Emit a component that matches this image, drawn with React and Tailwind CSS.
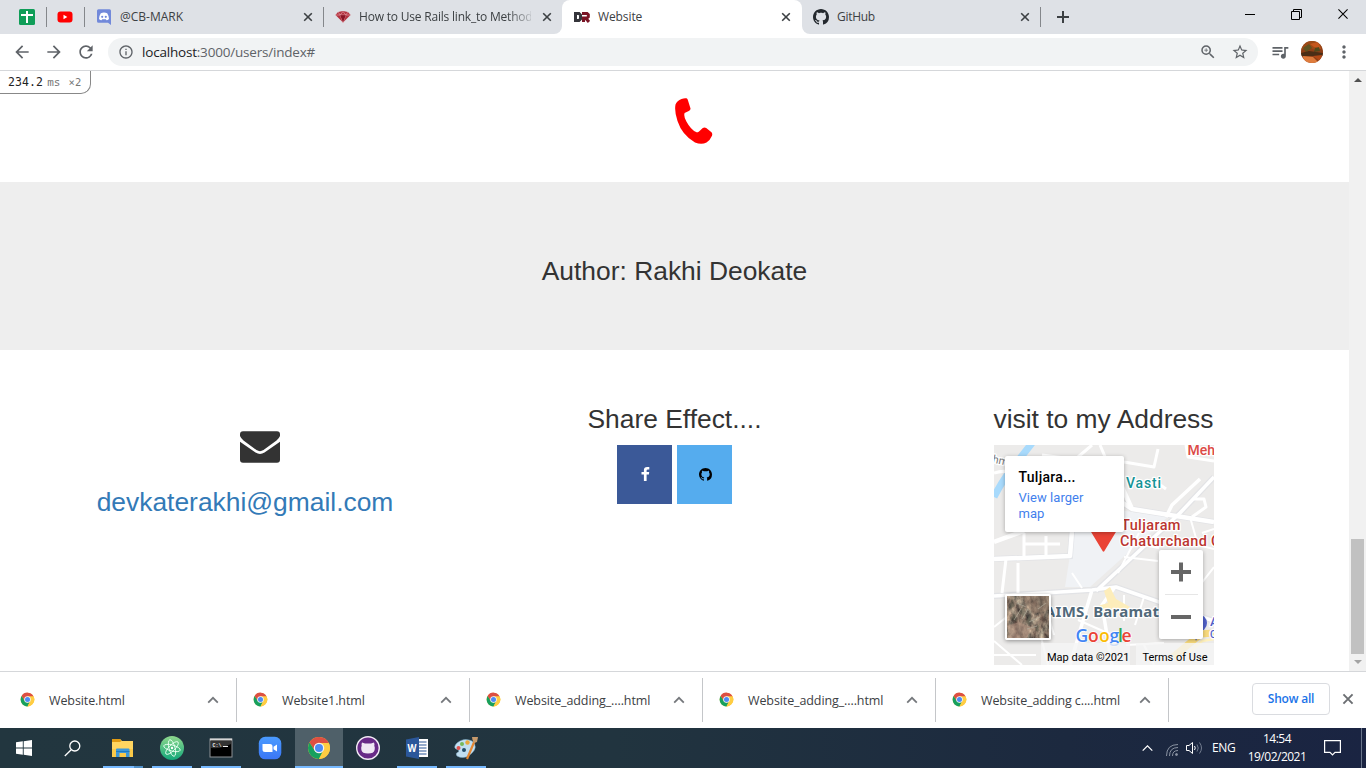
import React from "react";
import { MdArrowBack, MdArrowForward, MdRefresh, MdInfoOutline, MdStarBorder, MdZoomIn, MdQueueMusic, MdMoreVert } from "react-icons/md";

const GithubMark = ({ className }) => (
  <svg viewBox="0 0 16 16" className={className} fill="currentColor">
    <path d="M8 0C3.58 0 0 3.58 0 8c0 3.54 2.29 6.53 5.47 7.59.4.07.55-.17.55-.38 0-.19-.01-.82-.01-1.49-2.01.37-2.53-.49-2.69-.94-.09-.23-.48-.94-.82-1.13-.28-.15-.68-.52-.01-.53.63-.01 1.08.58 1.23.82.72 1.21 1.87.87 2.33.66.07-.52.28-.87.51-1.07-1.78-.2-3.64-.89-3.64-3.95 0-.87.31-1.59.82-2.15-.08-.2-.36-1.02.08-2.12 0 0 .67-.21 2.2.82.64-.18 1.32-.27 2-.27.68 0 1.36.09 2 .27 1.53-1.04 2.2-.82 2.2-.82.44 1.1.16 1.92.08 2.12.51.56.82 1.27.82 2.15 0 3.07-1.87 3.75-3.65 3.95.29.25.54.73.54 1.48 0 1.07-.01 1.93-.01 2.2 0 .21.15.46.55.38A8.013 8.013 0 0016 8c0-4.42-3.58-8-8-8z" />
  </svg>
);

const Chrome = ({ className }) => (
  <svg viewBox="0 0 48 48" className={className}>
    <circle cx="24" cy="24" r="22" fill="#fbc93b" />
    <path d="M24 14H43.600A22 22 0 0 0 4.950 13L15.300 29Z" fill="#dd4f43" />
    <path d="M4.950 13A22 22 0 0 0 24 46L32.700 29L24 34L15.300 29Z" fill="#17a05e" />
    <path d="M24 46A22 22 0 0 0 43.600 14H24L32.700 29Z" fill="#ffcd42" />
    <circle cx="24" cy="24" r="10.500" fill="#f4f4f4" />
    <circle cx="24" cy="24" r="8" fill="#4c8bf5" />
  </svg>
);

const Cross = ({ className }) => (
  <svg viewBox="0 0 10 10" className={className} stroke="currentColor" fill="none">
    <path d="M1.200 1.200L8.800 8.800M8.800 1.200L1.200 8.800" />
  </svg>
);

const Chevron = ({ className }) => (
  <svg viewBox="0 0 12 8" className={className} stroke="currentColor" fill="none">
    <path d="M1.200 6.600L6 1.800L10.800 6.600" />
  </svg>
);

function TabStrip() {
  return (
    <div className="flex h-[34px] bg-white text-[12px] text-[#3c4043]">
      <div className="flex h-full w-[562px] items-center rounded-br-[8px] bg-[#dee1e6]">
        <div className="flex w-[47px] justify-end">
          <svg viewBox="0 0 16 16" className="mr-[11px] h-4 w-4">
            <rect width="16" height="16" rx="1.500" fill="#0f9d58" />
            <path d="M8 2V14M2 6H14" stroke="#fff" strokeWidth="2" />
          </svg>
          <div className="-my-0.5 h-5 w-px bg-[#84878b]" />
        </div>
        <div className="flex w-[38px] justify-end">
          <svg viewBox="0 0 16 16" className="mr-[11px] h-4 w-4">
            <rect x="0.500" y="2.500" width="15" height="11" rx="3" fill="#f00" />
            <path d="M6.500 5.800V10.200L10.300 8Z" fill="#fff" />
          </svg>
          <div className="-my-0.5 h-5 w-px bg-[#84878b]" />
        </div>
        <div className="flex w-[239px] items-center">
          <svg viewBox="0 0 16 16" className="ml-[12px] h-4 w-4 shrink-0">
            <path d="M1.500 0.300H12.500A1.500 1.500 0 0 1 14 1.800V16L11 13.700H1.500A1.500 1.500 0 0 1 0 12.200V1.800A1.500 1.500 0 0 1 1.500 0.300Z" fill="#7289da" />
            <path d="M3.800 4.200Q7 2.800 10.200 4.200Q12 7 12 10Q10.800 11.200 9.500 11.200L8.800 10.200H5.200L4.500 11.200Q3.200 11.200 2 10Q2 7 3.800 4.200Z" fill="#fff" />
            <circle cx="5.200" cy="7.800" r="1.100" fill="#7289da" />
            <circle cx="8.800" cy="7.800" r="1.100" fill="#7289da" />
          </svg>
          <span className="ml-[7px] flex-1">@CB-MARK</span>
          <Cross className="mr-[10px] h-[10px] w-[10px] stroke-[1.600]" />
          <div className="h-5 w-px bg-[#84878b]" />
        </div>
        <div className="flex w-[238px] items-center">
          <svg viewBox="0 0 16 12" className="ml-[11px] h-3 w-4 shrink-0">
            <path d="M3 1L8 0L13 1L15.500 4L8 11.500L0.500 4Z" fill="#b3323f" />
            <path d="M3 1L5.200 4L8 0.500L10.800 4L13 1M0.500 4H15.500M5.200 4L8 11.500L10.800 4" stroke="#e39aa2" strokeWidth="0.700" fill="none" />
            <path d="M5.200 4.300H10.800L8 11Z" fill="#8a1526" />
          </svg>
          <span className="ml-[8px] w-[172px] overflow-hidden whitespace-nowrap tracking-[-0.2px] [mask-image:linear-gradient(to_right,black_86%,rgba(0,0,0,0.2))]">How to Use Rails link_to Method</span>
          <Cross className="ml-[11px] h-[10px] w-[10px] stroke-[1.600]" />
        </div>
      </div>
      <div className="h-full w-[240px] bg-[#dee1e6]">
        <div className="flex h-full items-center rounded-t-[8px] bg-white pl-[12px] pr-[11px]">
          <svg viewBox="0 0 16 12" className="h-3 w-4 shrink-0" fill="none" strokeWidth="3">
            <path d="M1.500 11V2.500H5L6.500 4V8L5 9.500H3" stroke="#35353b" />
            <path d="M9.500 11V7H13L14.300 5.800V3.700L13 2.500H8M11.500 7L15 11" stroke="#7a1425" />
          </svg>
          <span className="ml-[8px] flex-1 tracking-[-0.1px]">Website</span>
          <Cross className="h-[10px] w-[10px] stroke-[1.600]" />
        </div>
      </div>
      <div className="flex h-full flex-1 items-center rounded-bl-[8px] bg-[#dee1e6]">
        <GithubMark className="ml-[11px] h-4 w-4 text-[#24292e]" />
        <span className="ml-[8px] w-[183px] tracking-[-0.3px]">GitHub</span>
        <Cross className="h-[10px] w-[10px] stroke-[1.600]" />
        <div className="ml-[10px] h-5 w-px bg-[#84878b]" />
        <svg viewBox="0 0 12 12" className="ml-[16px] h-3 w-3" stroke="#3c4043" strokeWidth="2"><path d="M6 0V12M0 6H12" /></svg>
        <div className="mb-[6px] ml-auto flex items-center text-black">
          <svg viewBox="0 0 10 10" className="mr-[36px] h-[10px] w-[10px]" stroke="currentColor"><path d="M0 5.500H10" /></svg>
          <svg viewBox="0 0 11 11" className="mr-[35px] h-[11px] w-[11px]" stroke="currentColor" fill="none"><path d="M0.500 2.500H8.500V10.500H0.500ZM2.500 2.500V0.500H10.500V8.500H8.500" /></svg>
          <Cross className="mr-[17px] h-[12px] w-[12px] stroke-[0.900]" />
        </div>
      </div>
    </div>
  );
}

function Toolbar() {
  return (
    <div className="flex h-[37px] items-center border-b border-[#d5d7da] bg-white text-[#5f6368]">
      <MdArrowBack className="ml-[12px] h-5 w-5" />
      <MdArrowForward className="ml-[12px] h-5 w-5" />
      <MdRefresh className="ml-[12px] h-5 w-5" />
      <div className="ml-[12px] flex h-7 w-[1150px] items-center rounded-full bg-[#f1f3f4]">
        <MdInfoOutline className="ml-[10px] h-4 w-4" />
        <span className="ml-[8px] flex-1 text-[13.5px] tracking-[-0.2px]"><span className="text-[#202124]">localhost</span>:3000/users/index#</span>
        <MdZoomIn className="h-[18px] w-[18px]" />
        <MdStarBorder className="ml-[14px] mr-[9px] h-[18px] w-[18px]" />
      </div>
      <MdQueueMusic className="ml-[12px] h-5 w-5" />
      <svg viewBox="0 0 22 22" className="ml-[11px] h-[22px] w-[22px]">
        <defs>
          <clipPath id="face"><circle cx="11" cy="11" r="11" /></clipPath>
          <filter id="blend"><feGaussianBlur stdDeviation="0.700" /></filter>
        </defs>
        <g clipPath="url(#face)">
          <rect width="22" height="22" fill="#8e3f17" />
          <g filter="url(#blend)">
            <path d="M0 0H22V6L14 9L8 6L0 9Z" fill="#9c4a19" />
            <path d="M2 7L8 3L11 7L5 11Z" fill="#5e5220" />
            <path d="M9 3L17 1L20 8L13 6Z" fill="#c5561c" />
            <path d="M14 7L18 6L19 10L13 11Z" fill="#4f4a1e" />
            <path d="M0 12L8 10L22 12V15H0Z" fill="#4c2d14" />
            <path d="M2 15L12 16L18 22H3Z" fill="#df7b3d" />
            <path d="M12 15L21 14L19 20Z" fill="#b34a18" />
          </g>
        </g>
      </svg>
      <MdMoreVert className="ml-[11px] h-5 w-5" />
    </div>
  );
}

function MapView() {
  return (
    <div className="relative h-[220px] w-[220px] overflow-hidden font-[Roboto,sans-serif]">
      <svg viewBox="0 0 220 220" className="h-full w-full">
        <rect width="220" height="220" fill="#ecebea" />
        <path d="M76 86L117 64L174 72L96 142L71 142L76 110Z" fill="#f0f2f5" />
        <path d="M0 52Q10 32 24 16L38 -2" stroke="#a8dafc" strokeWidth="7" fill="none" />
        <g stroke="#dcdee2" strokeWidth="6" fill="none" opacity="0.600">
          <path d="M0 114L76 111L78 86M120 52L138 64L220 77M0 151L98 145L122 142L220 176M102 146L186 68L220 32" />
        </g>
        <g stroke="#fff" fill="none" strokeLinejoin="round">
          <path strokeWidth="4.500" d="M0 114L76 111L78 86M0 97L30 86M120 52L138 64L220 77M138 64L128 42" />
          <path strokeWidth="3.500" d="M0 151L98 145L122 142L220 176M98 145L76 220M121 142L108 160L118 220M102 146L186 68L220 32M172 72L178 60L206 34" />
          <path strokeWidth="3" d="M0 28Q18 22 30 38M48 10L78 14M98 0L84 12M106 0L112 14L160 22L164 4M192 0L194 12L220 16M158 34L172 44M200 54H210L212 62L198 72M30 88V112M52 91V110M30 99H66M12 114L8 148M24 118V150" />
          <path strokeWidth="2" d="M78 128L88 143M124 128L145 88M130 112L164 116M139 98L165 103M154 92L164 97M196 72L204 100L220 104M208 88L220 84M36 150L24 163L0 182M48 150L60 190M84 175L118 190M130 150V176M150 152L141 180M132 200L170 198M208 110L196 134L180 140M220 122L206 140M44 180L54 220M0 196L28 220M0 210H42M150 200L160 220" />
        </g>
        <path d="M110 146L116 142L122 154L136 162L132 166L119 163L116 172H100V162L114 158Z" fill="#fdedba" />
        <path d="M179 212L207 189L220 188" stroke="#f8da7c" strokeWidth="7" fill="none" />
        <path d="M184 218L208 196L220 194" stroke="#fff1bd" strokeWidth="2.500" fill="none" />
        <circle cx="204" cy="178" r="9" fill="#5161c8" />
        <path d="M198 184L202 196L207 185Z" fill="#5161c8" />
        <circle cx="204" cy="178" r="4.500" fill="#c8cff6" />
        <path d="M96.500 86H122.500L111 105Q109.500 108.500 108 105Z" fill="#ea4335" />
        <g fontFamily="Roboto, sans-serif" stroke="#fff" strokeWidth="2.500" paintOrder="stroke" strokeLinejoin="round" fontWeight="500">
          <text x="193.500" y="9.500" fontSize="14" fill="#dc4a45">Meh</text>
          <text x="132" y="42.500" fontSize="14" fill="#159396" textLength="35">Vasti</text>
          <text x="127" y="85" fontSize="14.500" fill="#bb3530" textLength="59.500">Tuljaram</text>
          <text x="126" y="101" fontSize="14.500" fill="#bb3530" textLength="87">Chaturchand</text>
          <text x="217" y="101" fontSize="14.500" fill="#bb3530">C</text>
          <text x="216" y="181" fontSize="13" fill="#5161c8">A</text>
          <text x="216" y="193" fontSize="10" fill="#5161c8">C</text>
          <text x="-2" y="18" fontSize="11" fontWeight="400" fill="#777" transform="rotate(12 0 18)">hm</text>
          <text x="51" y="172" fontSize="15" fill="#51697a" fontFamily="Noto Sans, sans-serif" fontWeight="700" textLength="114">AIMS, Baramat</text>
        </g>
        <g fontFamily="Open Sans, sans-serif" fontSize="17.500" fontWeight="600" stroke="#fff" strokeWidth="1.500" paintOrder="stroke">
          <text y="197" x="81.500" fill="#4285f4">G</text>
          <text y="197" x="94" fill="#ea4335">o</text>
          <text y="197" x="105" fill="#fbbc05">o</text>
          <text y="197" x="115.500" fill="#4285f4">g</text>
          <text y="197" x="127.500" fill="#ea4335">e</text>
          <text y="197" x="124" fill="#34a853" stroke="none">l</text>
        </g>
      </svg>
      <div className="absolute left-[11px] top-[11px] h-[76px] w-[119px] rounded-[2px] bg-white pl-[13.5px] pt-[12px] shadow-[0_1px_4px_rgba(0,0,0,0.3)]">
        <div className="text-[14px] font-medium leading-[18px] tracking-[0.3px] text-black">Tuljara...</div>
        <div className="mt-[4px] w-[80px] text-[13px] leading-[16px] tracking-[0.05px] text-[#427fed]">View larger map</div>
      </div>
      <div className="absolute left-[11px] top-[149px] h-[46px] w-[46px] rounded-[2px] border-2 border-white shadow-[0_1px_4px_rgba(0,0,0,0.4)]">
        <svg viewBox="0 0 42 42" className="h-full w-full">
          <defs><filter id="terrain" colorInterpolationFilters="sRGB"><feTurbulence type="fractalNoise" baseFrequency="0.160 0.100" numOctaves="4" seed="7" /><feColorMatrix values="1 0 0 0 0.020  0.900 0.100 0 0 -0.040  0.750 0.100 0 0 -0.020  0 0 0 0 1" /></filter></defs>
          <rect width="42" height="42" fill="#827768" />
          <rect width="42" height="42" filter="url(#terrain)" />
          <path d="M0 30L12 26L24 31L20 42H3Z" fill="#b89683" opacity="0.500" />
          <path d="M14 0H42V14L26 18Z" fill="#957c6b" opacity="0.450" />
          <path d="M5 1L8 10L2 14ZM12 17L17 9L18 21ZM18 26L24 18L23 29ZM2 22L8 18L10 26ZM28 34L34 25L31 36Z" fill="#555b4a" opacity="0.350" />
          <path d="M7 24L14 13M15 23L21 13M22 26L33 21M20 33L30 30M10 7L19 11M31 13L39 7" stroke="#b5b2a2" opacity="0.600" />
        </svg>
      </div>
      <div className="absolute left-[165px] top-[105px] flex h-[89px] w-[44px] flex-col items-center justify-around rounded-[2px] bg-white shadow-[0_1px_4px_rgba(0,0,0,0.3)]">
        <svg viewBox="0 0 20 20" className="h-5 w-5" stroke="#666" strokeWidth="4"><path d="M10 0.500V19.500M0 10H20" /></svg>
        <div className="-my-3 h-px w-[33px] bg-[#e6e6e6]" />
        <svg viewBox="0 0 20 20" className="h-5 w-5" stroke="#666" strokeWidth="4"><path d="M0 10H20" /></svg>
      </div>
      <div className="absolute bottom-0 right-0 flex h-[15px] items-center whitespace-nowrap text-[11px] text-black">
        <span className="mr-[6px] bg-[#f5f5f5]/80 pl-[6px] pr-[1px]">Map data ©2021</span>
        <span className="bg-[#f5f5f5]/80 pl-[6px] pr-[6.500px]">Terms of Use</span>
      </div>
    </div>
  );
}

function Page() {
  return (
    <div className="flex h-[600px] bg-white font-['Liberation_Sans',sans-serif]">
      <div className="relative w-[1349px] text-[26.400px] leading-[29px] text-[#333]">
        <div className="absolute left-0 top-0 flex h-[23px] w-[91px] items-center rounded-br-[10px] border-b border-r border-[#888] pl-[8px] pt-[1px] font-['DejaVu_Sans_Mono',monospace] text-[11.500px] leading-none text-[#222]">
          <span className="tracking-[0.1px]">234.2</span><span className="ml-[4px] text-[11px] text-[#777]">ms</span><span className="ml-[8px] text-[10.500px] tracking-[0.3px] text-[#777]">×2</span>
        </div>
        <div className="flex h-[111px] justify-center pl-[38px] pt-[27px]">
          <svg viewBox="0 0 38 47" className="h-[47px] w-[38px]">
            <path d="M6.500 1Q9.500 -0.200 11.500 0.300Q12.600 0.800 13 2.500L15.500 10.500Q15.700 12 13.800 13L9.600 15Q8.400 18 11.400 23.500Q16 32 21.500 34.300Q22.700 34.600 24 33.500L27.800 30Q29.500 28.800 31.200 30L36.500 34.200Q37.700 35.600 37 37.800Q35 42.500 31.500 44.500Q26.500 47.200 20 44.500Q7 37 2.500 23Q-0.800 13 0.500 6.500Q2 2.600 6.500 1Z" fill="#f00" />
          </svg>
        </div>
        <div className="flex h-[168px] justify-center bg-[#eee] pt-[75px]">Author: Rakhi Deokate</div>
        <div className="flex pt-[55px]">
          <div className="flex w-[490px] flex-col items-center">
            <svg viewBox="0 0 40 32" className="ml-[30px] mt-[26px] h-8 w-10">
              <path d="M3 0.300H37A3 3 0 0 1 40 3.300V5Q39 7.500 36.500 9.500L23.500 19Q20 21.300 16.500 19L3.500 9.500Q1 7.500 0 5V3.300A3 3 0 0 1 3 0.300Z" fill="#333" />
              <path d="M0 10.800L15.500 21.600Q20 24.300 24.500 21.600L40 10.800V28.700A3 3 0 0 1 37 31.700H3A3 3 0 0 1 0 28.700Z" fill="#333" />
            </svg>
            <div className="mt-[25px] text-[#337ab7]">devkaterakhi@gmail.com</div>
          </div>
          <div className="flex w-[369px] flex-col items-center">
            <div>Share Effect....</div>
            <div className="mt-[11px] flex gap-[5px]">
              <div className="flex h-[59px] w-[55px] items-center justify-center bg-[#3b5998]">
                <svg viewBox="0 0 9 14" className="mb-[1px] ml-[1px] h-[14px] w-[9px]"><path d="M8.300 0.100V2.400H6.900Q5.600 2.400 5.600 3.500V5.100H8.200L7.900 7.600H5.600V14H2.900V7.600H0.500V5.100H2.900V3.100Q2.900 0 6.200 0Q7.500 0 8.300 0.100Z" fill="#fff" /></svg>
              </div>
              <div className="flex h-[59px] w-[55px] items-center justify-center bg-[#55acee]"><GithubMark className="ml-[1px] h-[13px] w-[13px] text-black" /></div>
            </div>
          </div>
          <div className="flex w-[489px] flex-col items-center">
            <div>visit to my Address</div>
            <div className="ml-px mt-[11px]"><MapView /></div>
          </div>
        </div>
      </div>
      <div className="flex w-[17px] flex-col items-center bg-[#f1f1f1]">
        <svg viewBox="0 0 8 4" className="mt-[7px] h-1 w-2"><path d="M0 4L4 0L8 4Z" fill="#505050" /></svg>
        <div className="mt-[457px] h-[115px] w-[13px] bg-[#c1c1c1]" />
        <svg viewBox="0 0 8 4" className="mt-[6px] h-1 w-2"><path d="M0 0L4 4L8 0Z" fill="#a3a3a3" /></svg>
      </div>
    </div>
  );
}

const downloads = ["Website.html", "Website1.html", "Website_adding_....html", "Website_adding_....html", "Website_adding c....html"];

function Downloads() {
  return (
    <div className="flex h-[57px] items-center border-t border-[#d5d7da] bg-white text-[12.500px] text-[#3c4043]">
      {downloads.map((name, i) => (
        <div key={i} className={"flex h-[44px] items-center border-r border-[#c4c6c9] " + (i === 0 ? "w-[237px] pl-[20px]" : "w-[233px] pl-[16px]")}>
          <Chrome className="mb-[2px] h-[15px] w-[15px]" />
          <span className="ml-[14px] flex-1 whitespace-nowrap pt-[2px] tracking-[-0.1px]">{name}</span>
          <Chevron className="mr-[17px] h-[8px] w-[12px] stroke-[1.800] text-[#75787c]" />
        </div>
      ))}
      <div className="ml-[83px] mb-[2px] flex h-8 w-[78px] items-center justify-center rounded-[4px] border border-[#dadce0] text-[12px] font-semibold tracking-[-0.2px] text-[#1a73e8]">Show all</div>
      <Cross className="mb-[2px] ml-[12px] h-3 w-3 stroke-[1.600] text-[#6b6e72]" />
    </div>
  );
}

function AppIcon({ kind }) {
  const c = "h-6 w-6";
  if (kind === "chrome") return <Chrome className={c} />;
  if (kind === "files") return (
    <svg viewBox="0 0 24 24" className={c}>
      <path d="M1 3H9L11 5H22V21H1Z" fill="#ffd560" /><path d="M1 3H9L10.500 5L9 6H1Z" fill="#e19b13" /><path d="M1 13H22V21H1Z" fill="#fac948" />
      <path d="M5 21V13.500Q5 12.500 6 12.500H17.500Q18.500 12.500 18.500 13.500V21H15V17H8.500V21Z" fill="#3d97d8" /><path d="M5 15.500H18.500" stroke="#1c7ac1" />
    </svg>);
  if (kind === "atom") return (
    <svg viewBox="0 0 24 24" className={c}>
      <defs><linearGradient id="atom" x2="0" y2="1"><stop stopColor="#8fd88d" /><stop offset="1" stopColor="#13a77a" /></linearGradient></defs>
      <circle cx="12" cy="12" r="12" fill="url(#atom)" />
      <g fill="none" stroke="#e7fff0" strokeWidth="0.900"><ellipse cx="12" cy="12" rx="8.500" ry="3" transform="rotate(15 12 12)" /><ellipse cx="12" cy="12" rx="8.500" ry="3" transform="rotate(75 12 12)" /><ellipse cx="12" cy="12" rx="8.500" ry="3" transform="rotate(135 12 12)" /></g>
      <circle cx="12" cy="12" r="1.200" fill="#fff" />
    </svg>);
  if (kind === "cmd") return (
    <svg viewBox="0 0 24 24" className={c}>
      <rect x="1" y="3" width="22" height="18" fill="#000" stroke="#8e9296" /><path d="M1 3.500H23" stroke="#d5d5d5" strokeWidth="2" /><path d="M2 5V12Q12 13 22 8V5Z" fill="#333" />
      <text x="3.500" y="11" fontSize="5" fontWeight="bold" fontFamily="Liberation Mono" fill="#eee">C:\</text><path d="M14 10.500H19" stroke="#eee" />
    </svg>);
  if (kind === "zoom") return (
    <svg viewBox="0 0 24 24" className={c}>
      <defs><linearGradient id="zm" x2="0" y2="1"><stop stopColor="#4a9bff" /><stop offset="1" stopColor="#3b76f5" /></linearGradient></defs>
      <rect x="0.800" y="0.800" width="22.500" height="22.500" rx="6.500" fill="url(#zm)" />
      <path d="M4.500 8H12Q14.500 8 14.500 10.500V16H7Q4.500 16 4.500 13.500ZM15.500 10.800L19 8.500V15.500L15.500 13.200Z" fill="#fff" />
    </svg>);
  if (kind === "github") return (
    <svg viewBox="0 0 24 24" className={c}>
      <circle cx="12" cy="12" r="11.300" fill="#682a87" stroke="#f2eaf5" strokeWidth="1.400" />
      <path d="M6 6.500L9 7.600H15L18 6.500Q18.800 8.200 18.300 9.800Q19.200 11.500 18.600 14Q18 17.500 12 17.500Q6 17.500 5.400 14Q4.800 11.500 5.700 9.800Q5.200 8.200 6 6.500Z" fill="#f0e8f4" />
    </svg>);
  if (kind === "word") return (
    <svg viewBox="0 0 24 24" className={c}>
      <rect x="12" y="3" width="11" height="18" fill="#fff" /><path d="M14 6H21.500M14 9H21.500M14 12H21.500M14 15H21.500M14 18H21.500" stroke="#2b5797" strokeWidth="1.200" />
      <path d="M1 3.500L14 1V23L1 20.500Z" fill="#2b579a" /><text x="2.500" y="16" fontSize="11" fontWeight="bold" fontFamily="Open Sans" fill="#fff" textLength="9" lengthAdjust="spacingAndGlyphs">W</text>
    </svg>);
  return (
    <svg viewBox="0 0 24 24" className={c}>
      <path d="M3 7Q10 1 18 5Q25 11 17 18Q10 24 3 20Q1 17 4.500 16Q6 14 2 13Q-1 11 3 7Z" fill="#c1dff1" stroke="#80aec8" strokeWidth="0.500" />
      <circle cx="4.500" cy="12" r="2" fill="#df504c" /><circle cx="8" cy="8" r="2" fill="#76b959" /><circle cx="13.500" cy="6.500" r="2.200" fill="#e9a83d" /><circle cx="10" cy="14" r="2" fill="#244e6a" />
      <path d="M13 23L21 4" stroke="#e48732" strokeWidth="2.200" /><path d="M18 1L24 1L23 6L20 7L18.500 4Z" fill="#c79a6c" />
    </svg>);
}

const apps = ["files", "atom", "cmd", "zoom", "chrome", "github", "word", "paint"];

function Taskbar() {
  return (
    <div className="flex h-10 items-center bg-[linear-gradient(90deg,#22363f_0%,#21343f_45%,#1c293f_78%,#1a2442_100%)] text-[12px] text-white">
      <div className="flex w-12 justify-center">
        <svg viewBox="0 0 16 16" className="h-4 w-4" fill="#fff"><path d="M0 2.300L6.800 1.300V7.500H0ZM7.700 1.200L16 0V7.500H7.700ZM0 8.500H6.800V14.700L0 13.700ZM7.700 8.500H16V16L7.700 14.800Z" /></svg>
      </div>
      <div className="flex w-[50px] justify-center">
        <svg viewBox="0 0 17 17" className="mr-[2px] h-[17px] w-[17px]" fill="none" stroke="#fff" strokeWidth="1.300"><circle cx="10.800" cy="6" r="5" /><path d="M7.200 9.700L0.800 16" /></svg>
      </div>
      {apps.map((kind) => (
        <div key={kind} className="flex h-10 w-[49px] justify-center">
          <div className={"flex h-10 flex-col items-center justify-end " + (kind === "chrome" ? "w-12 bg-[#4f6069]" : "w-10")}>
            <div className="mb-[6px]"><AppIcon kind={kind} /></div>
            <div className={"h-[2px] w-full " + (kind === "zoom" || kind === "github" ? "" : kind === "files" ? "border-r-[9px] border-[#5090c8] bg-[#76b9ff]" : "bg-[#76b9ff]")} />
          </div>
        </div>
      ))}
      <div className="ml-auto flex h-10 items-center">
        <Chevron className="h-[8px] w-[13px] stroke-[1.300]" />
        <svg viewBox="0 0 12 12" className="ml-[12px] mt-[3px] h-[12px] w-[12px]" fill="none" stroke="#8a93a2" strokeWidth="1">
          <path d="M0.500 12Q0.500 0.500 12 0.500M3.500 12Q3.500 3.500 12 3.500M6.500 12Q6.500 6.500 12 6.500" /><circle cx="10.500" cy="10.500" r="1" fill="#8a93a2" />
        </svg>
        <svg viewBox="0 0 17 14" className="ml-[8px] h-[14px] w-[17px]" fill="none" stroke="#fff"><path d="M0.500 4.500H3L6.500 1.500V12.500L3 9.500H0.500Z" /><path d="M8.500 5Q10 7 8.500 9" /><path d="M11 3.500Q13.500 7 11 10.500M13.500 1.500Q17.500 7 13.500 12.500" stroke="#737d90" /></svg>
        <span className="ml-[9px] w-[24px] tracking-[-0.4px]">ENG</span>
        <div className="ml-[11px] flex w-[60px] flex-col items-center leading-[18px] tracking-[-0.500px]"><span>14:54</span><span>19/02/2021</span></div>
        <svg viewBox="0 0 17 16" className="ml-[17px] h-4 w-[17px]" fill="none" stroke="#fff" strokeWidth="1.200"><path d="M0.600 0.600H16.400V12.400H11L8.500 15L6 12.400H0.600Z" /></svg>
        <div className="ml-[20px] h-10 w-px bg-[#69758a]" />
        <div className="w-[4px]" />
      </div>
    </div>
  );
}

export default function App() {
  return (
    <div className="h-[768px] w-[1366px] overflow-hidden font-['Open_Sans','Noto_Sans',sans-serif]">
      <TabStrip />
      <Toolbar />
      <Page />
      <Downloads />
      <Taskbar />
    </div>
  );
}
